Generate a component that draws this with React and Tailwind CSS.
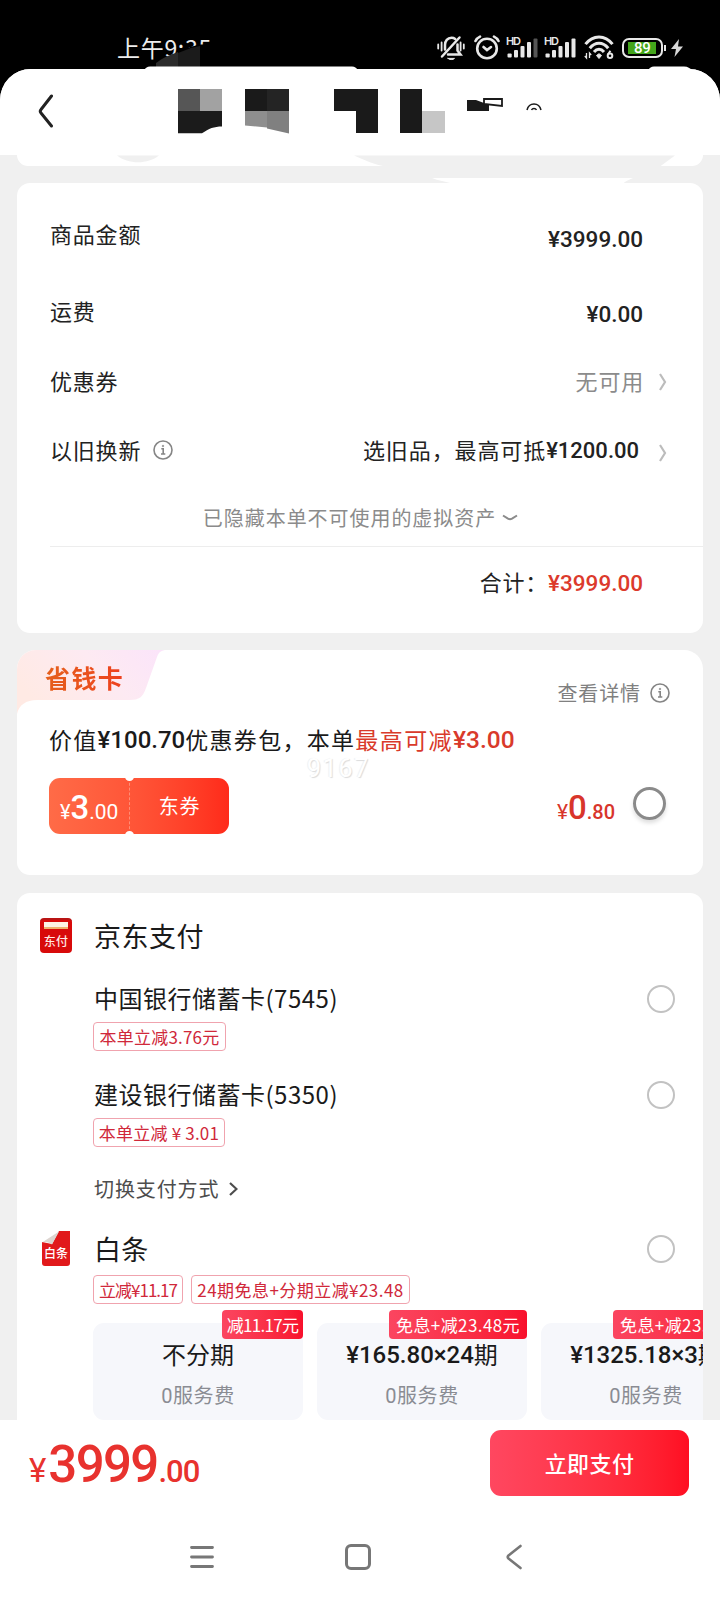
import { clsx } from "clsx";

const CJK = "font-['Noto_Sans_CJK_SC',sans-serif]";
const NUM = "font-['Roboto','Noto_Sans_CJK_SC',sans-serif] font-medium";

const banks = [
    { name: "中国银行储蓄卡", tail: "(7545)", tag: "本单立减3.76元", tagWidth: "w-[133px]" },
    { name: "建设银行储蓄卡", tail: "(5350)", tag: "本单立减 ¥ 3.01", tagWidth: "w-[132px]" },
];

const plans = [
    { amount: "", label: "不分期", badge: "减11.17元", badgeClass: "w-[81px] tracking-[-0.7px]" },
    { amount: "¥165.80×24", label: "期", badge: "免息+减23.48元", badgeClass: "w-[138px] tracking-[0.4px]" },
    { amount: "¥1325.18×3", label: "期", badge: "免息+减23.48元", badgeClass: "w-[138px] tracking-[0.4px]" },
];

function MutedBell() {
    return (
        <svg className="w-7 h-[26px]" viewBox="0 0 28 26" fill="none" stroke="#e8e8e8" strokeWidth="2.500" strokeLinecap="round">
            <path d="M1.200 9.500v4M4.600 7.500v8M26.800 9.500v4M23.600 7.500v8" strokeWidth="1.800" />
            <path d="M8 14.500V10c0-4 2.500-7.200 6.500-7.200 1.500 0 2.700.4 3.700 1.200M20.500 9.500v6l3 4H11" />
            <path d="M22.500 2.500 5 21.500" />
            <path d="M11 23.400h6.500c-1.500 1.600-5 1.600-6.500 0z" fill="#e8e8e8" strokeWidth="1" />
        </svg>
    );
}

function Alarm() {
    return (
        <svg className="w-[26px] h-[26px] ml-[9px]" viewBox="0 0 26 26" fill="none" stroke="#e8e8e8" strokeWidth="2.600" strokeLinecap="round">
            <circle cx="13" cy="13.500" r="9.800" />
            <path d="m9.500 12 3.500 3 4-3" />
            <path d="M1.500 6C2.500 4 4 2.500 6 1.600M24.500 6c-1-2-2.500-3.500-4.500-4.400" />
        </svg>
    );
}

function Signal({ weak, className }) {
    return (
        <svg className={clsx("w-8 h-[26px]", className)} viewBox="0 0 32 26" fill="#e8e8e8">
            <text x="0" y="10" fontSize="11" fontWeight="600" fontFamily="Inter, sans-serif" textLength="15">HD</text>
            <rect x="1.500" y="18.500" width="4.200" height="4" rx="1" />
            <rect x="8" y="15" width="4" height="7.500" rx="1" />
            <rect x="14.500" y="11" width="4" height="11.500" rx="1" />
            <rect x="21" y="7" width="4" height="15.500" rx="1" />
            <rect x="27.500" y="3.500" width="4" height="19" rx="1" fill={weak ? "#555" : "#e8e8e8"} />
        </svg>
    );
}

function Wifi() {
    return (
        <svg className="w-[30px] h-[26px] ml-2" viewBox="0 0 30 26" fill="none" stroke="#e8e8e8" strokeWidth="3">
            <path d="M1.500 9.200C9-.5 21-.5 28.500 9.200M5.800 13.200c5.300-6.600 13.100-6.600 18.400 0M10 17c3-3.700 7-3.700 10 0" />
            <path d="m12.500 20.500 2.500-1.800 2.500 1.800-2.500 3z" fill="#e8e8e8" strokeWidth="1" />
            <path d="M2.500 18v5L.8 21M5.500 23v-5l1.700 2" strokeWidth="1.300" />
            <circle cx="26" cy="20.800" r="2.300" strokeWidth="2" />
            <path d="m24 19.500 2.400-3.700" strokeWidth="2" />
        </svg>
    );
}

function Battery() {
    return (
        <div className="flex items-center ml-2">
            <div className="w-[41px] h-[20px] rounded-[7px] border-2 border-[#e8e8e8] p-[2px]">
                <div className="w-[28px] h-[12px] ml-[2px] bg-[#43a51b] text-white text-[15px] leading-[12.500px] pl-[6px] tracking-[-0.3px] font-medium font-['Roboto',sans-serif]">
                    89
                </div>
            </div>
            <div className="w-[2px] h-[6px] bg-[#e8e8e8] ml-px" />
            <svg className="w-3 h-[18px] ml-[5px]" viewBox="0 0 12 18" fill="#d8d8d8">
                <path d="M8 0 0 10h5l-1.500 8L12 7.500H7z" />
            </svg>
        </div>
    );
}

function Info({ className }) {
    return (
        <svg className={clsx("w-5 h-5", className)} viewBox="0 0 20 20" fill="none" stroke="#858585" strokeWidth="1.600">
            <circle cx="10" cy="10" r="9" />
            <path d="M8.300 8.800h1.900v5M8 14h4.300" />
            <circle cx="10" cy="6" r="0.800" fill="#858585" strokeWidth=".6" />
        </svg>
    );
}

function Arrow({ className }) {
    return (
        <svg className={clsx("w-2 h-[18px]", className)} viewBox="0 0 8 18" fill="none" stroke="#bcbcbc" strokeWidth="2.200">
            <path d="m1 1 5 8-5 8" />
        </svg>
    );
}

function Radio() {
    return <span className="w-7 h-7 rounded-full border-2 border-[#c2c2c2] shrink-0" />;
}

function Tag({ children, className }) {
    return (
        <span
            className={clsx(
                "h-[29px] rounded-[4px] border border-[#f0a3ae] text-[#d0283a] text-[17px] leading-none flex items-center justify-center whitespace-nowrap",
                className
            )}
        >
            {children}
        </span>
    );
}

// Pixelated title plus the leftover brush marks around it
function RedactedMarks() {
    return (
        <svg className="absolute left-0 top-0 w-[720px] h-[184px]" viewBox="0 0 720 184">
            <path d="M163 67v-6l15-9 12-5 10-2.500h15V67z" fill="#000" />
            <path d="M156 67v-4c7-5 13-8 22-11v15z" fill="#2b2b2b" />
            <path d="M178 67V53l13-5 9-2v21z" fill="#1b1b1b" />
            <path d="M144 70c2-2 3-3.500 6-3.500h202c3 0 4 1.500 6 3.500zM648 70c2-2 3-3.500 6-3.500h30c4 0 6 2 8 3.500z" fill="#fff" />

            <path d="M178 89h22v22h-22z" fill="#565656" />
            <path d="M200 89h22v22h-22z" fill="#a2a2a2" />
            <path d="M178 111h44v15.500c-8 0-13 2-20 6.800h-24z" fill="#1b1b1b" />
            <path d="M245 89h22v22h-22z" fill="#1a1a1a" />
            <path d="M267 89h22v22h-22z" fill="#242424" />
            <path d="M245 111h22v16.500l-22-2z" fill="#8e8e8e" />
            <path d="M267 111h22v22.500l-22-5z" fill="#808080" />
            <path d="M334 89h44v44h-22v-22h-22z" fill="#1a1a1a" />
            <path d="M400 89h22v44h-22z" fill="#1a1a1a" />
            <path d="M422 111h23v22h-23z" fill="#c6c6c6" />
            <path d="M467 100h9l8 3h5v8h-22z" fill="#1a1a1a" />
            <path d="M484 99h18v7l-18-2z" fill="#fff" stroke="#1a1a1a" strokeWidth="1.800" />
            <path d="M527 110c2-8 12-8 14 0M531.500 110c1-2 4-2 5 0" fill="none" stroke="#1a1a1a" strokeWidth="1.500" />

            <path d="M117 155.500h42c-11 9-31 9-42 0z" fill="#f0f0f0" />
            <path d="M354 155.500h321l-15 11H385c-10-2-20-6-31-11z" fill="#f0f0f0" />
            <path d="M432 178h201c-4 2-7 3-10 5.500H452c-6-2-14-3-20-5.500z" fill="#fff" />
        </svg>
    );
}

function StatusBar() {
    return (
        <div className="h-[69px] pt-[34px] pl-[117px] pr-[37px] flex justify-between items-start">
            <span className="text-[#ededed] text-[23px] leading-[26px] tracking-[0.7px]">上午9:35</span>
            <div className="flex items-center h-[28px]">
                <MutedBell />
                <Alarm />
                <Signal weak className="ml-[6px]" />
                <Signal className="ml-[6px]" />
                <Wifi />
                <Battery />
            </div>
        </div>
    );
}

function Summary() {
    return (
        <section className="mx-[17px] mt-[17px] h-[450px] rounded-[13px] bg-white pt-[15px] pl-[33px] text-[22px] leading-none text-[#222]">
            <div className="h-[76px] pr-[60px] flex items-center justify-between">
                <span className="pb-[6px] tracking-[0.8px]">商品金额</span>
                <span className={clsx(NUM, "text-[22.5px] pt-[6px]")}>¥3999.00</span>
            </div>
            <div className="h-[76px] pr-[60px] flex items-center justify-between">
                <span className="pb-[5px] tracking-[0.8px]">运费</span>
                <span className={clsx(NUM, "text-[22.5px] pt-[5px]")}>¥0.00</span>
            </div>
            <div className="h-[65px] pr-[36px] flex items-center">
                <span className="pb-[6px] tracking-[0.8px]">优惠券</span>
                <span className="pb-[6px] ml-auto text-[#8b8b8b] tracking-[0.8px]">无可用</span>
                <Arrow className="ml-[15px] -mt-[2px]" />
            </div>
            <div className="h-[73px] pr-[36px] flex items-center">
                <span className="pb-[6px] tracking-[0.8px]">以旧换新</span>
                <Info className="ml-[12px] -mt-[3px]" />
                <span className="pb-[6px] ml-auto tracking-[0.9px]">选旧品，最高可抵</span>
                <span className={clsx(NUM, "text-[22px] -mt-px")}>¥1200.00</span>
                <Arrow className="ml-[20px] mt-[3px]" />
            </div>
            <div className="h-[59px] pt-[2px] pr-[32px] flex items-center justify-center text-[20px] tracking-[0.95px] text-[#8b8b8b] border-b border-[#ededed]">
                已隐藏本单不可使用的虚拟资产
                <svg className="w-4 h-2 ml-[6px]" viewBox="0 0 16 8" fill="none" stroke="#8b8b8b" strokeWidth="2">
                    <path d="m1 1.500 5 3.200q2 1.200 4 0l5-3.200" />
                </svg>
            </div>
            <div className="h-[73px] pr-[60px] flex items-center justify-end">
                <span className="pb-[5px] tracking-[0.8px]">合计：</span>
                <span className={clsx(NUM, "text-[22.5px] text-[#dc3a2c]")}>¥3999.00</span>
            </div>
        </section>
    );
}

function SavingCard() {
    return (
        <section className="relative mx-[17px] mt-[17px] h-[225px] rounded-t-[19px] rounded-b-[13px] bg-white overflow-hidden leading-none text-[#1a1a1a]">
            <svg className="absolute left-0 top-0 w-[150px] h-[64px]" viewBox="0 0 150 64">
                <defs>
                    <linearGradient id="tab" x1="0" y1=".5" x2="1" y2=".1">
                        <stop offset="0" stopColor="#ffeae4" />
                        <stop offset=".55" stopColor="#fdeaf2" />
                        <stop offset="1" stopColor="#fbe4fa" />
                    </linearGradient>
                </defs>
                <path d="M0 0h150c-6 0-8 2-10 7l-11 31c-3 9-7 12-16 12H20C9 50 2 55 0 64z" fill="url(#tab)" />
            </svg>
            <div className="relative h-[56px] flex justify-between pl-[28px] pr-[33px]">
                <span className="pt-[15px] text-[25px] tracking-[1.4px] font-bold bg-linear-to-r from-[#e5601c] to-[#ee3f1e] bg-clip-text text-transparent">
                    省钱卡
                </span>
                <span className="pt-[29px] flex items-center text-[20px] tracking-[0.9px] text-[#808080] whitespace-nowrap">
                    查看详情
                    <Info className="ml-[9px]" />
                </span>
            </div>
            <div className="relative mt-[20px] pl-[32px] h-[26px] flex items-center text-[23px] whitespace-nowrap">
                <span className="tracking-[1.3px]">价值</span>
                <span className={clsx(NUM, "text-[24px] pt-[2px]")}>¥100.70</span>
                <span className="tracking-[1.3px]">优惠券包，本单</span>
                <span className="tracking-[1.4px] text-[#d93a2b]">最高可减</span>
                <span className={clsx(NUM, "text-[24.500px] pt-[2px] text-[#d93a2b]")}>¥3.00</span>
            </div>
            <span className="absolute left-[290px] top-[106px] text-[25px] tracking-[1.7px] text-white font-['Roboto',sans-serif] [text-shadow:1px_1px_1px_#dcdcdc,-1px_0_1px_#f0f0f0]">
                9167
            </span>
            <div className="mt-[26px] pl-[32px] pr-[37px] flex items-start">
                <div className="relative w-[180px] h-[56px] rounded-[11px] bg-linear-to-r from-[#ff6b47] via-[#ff5336] to-[#ff2a1a] text-white flex overflow-hidden">
                    <div className={clsx(NUM, "w-[81px] pl-[11px] pt-[13px] flex items-baseline border-r border-dashed border-[#ff8d75]")}>
                        <span className="text-[20px] font-normal">¥</span>
                        <span className="text-[33px] leading-[33px]">3</span>
                        <span className="text-[21px] font-normal">.00</span>
                    </div>
                    <div className="flex-1 flex items-center justify-center text-[20px] tracking-[0.8px]">东券</div>
                    <span className="absolute left-[76px] -top-[6px] w-[9px] h-[9px] rounded-full bg-white" />
                    <span className="absolute left-[76px] -bottom-[6px] w-[9px] h-[9px] rounded-full bg-white" />
                </div>
                <div className={clsx(NUM, "ml-auto pt-[13px] flex items-baseline text-[#d8352b]")}>
                    <span className="text-[21px] font-normal">¥</span>
                    <span className="text-[33px] leading-[33px]">0</span>
                    <span className="text-[20px]">.80</span>
                </div>
                <span className="mt-[9px] ml-[18px] w-[33px] h-[33px] rounded-full border-3 border-[#8a8a8a] shadow-[0_3px_4px_#0002]" />
            </div>
        </section>
    );
}

function Payment() {
    return (
        <section className="mx-[17px] mt-[18px] h-[527px] rounded-t-[13px] bg-white overflow-hidden pl-[77px] leading-none text-[#1a1a1a]">
            <div className="-ml-[54px] pt-[25px] flex">
                <div className="w-8 h-[35px] rounded-[4px] bg-[#d80a0a] border-t-2 border-[#b91414] pt-[2px] flex flex-col items-center">
                    <span className="w-6 h-[7px] bg-[#fdf3e4] border-b-2 border-[#eeb36e]" />
                    <span className="mt-[6px] text-[12px] tracking-[0.3px] font-medium text-[#ffe9e4]">东付</span>
                </div>
                <h2 className="ml-[22px] mt-[4px] text-[27px] tracking-[0.5px]">京东支付</h2>
            </div>

            {banks.map((bank, i) => (
                <div key={bank.name} className={i === 0 ? "mt-[31px]" : "mt-[29px]"}>
                    <div className="h-[30px] pr-[28px] flex items-center justify-between text-[24px]">
                        <span className="pb-[2px] tracking-[0.5px]">
                            {bank.name}
                            <span>{bank.tail}</span>
                        </span>
                        <Radio />
                    </div>
                    <Tag className={clsx("mt-[8px] -ml-px tracking-[0.2px]", bank.tagWidth)}>{bank.tag}</Tag>
                </div>
            ))}

            <div className="mt-[32px] flex items-center text-[20px] tracking-[0.9px] text-[#4d4d4d]">
                切换支付方式
                <svg className="w-[9px] h-[14px] ml-[10px]" viewBox="0 0 9 14" fill="none" stroke="#4d4d4d" strokeWidth="2.200">
                    <path d="m1 1 6.500 6L1 13" />
                </svg>
            </div>

            <div className="-ml-[52px] mt-[32px] pr-[28px] h-[35px] flex items-center">
                <svg className="w-7 h-[35px]" viewBox="0 0 28 35">
                    <path d="M17 0h11v32q0 3-3 3H3q-3 0-3-3V11l10 2z" fill="#e1191b" />
                    <path d="m0 11.500 17-11-7 13c-2-2-7-3-10-2z" fill="#ddd5d0" />
                    <text x="2" y="27" fontSize="12" fontWeight="500" fontFamily="Noto Sans CJK SC" fill="#fff">白条</text>
                </svg>
                <h2 className="ml-[24px] text-[27px] tracking-[0.3px]">白条</h2>
                <span className="ml-auto flex">
                    <Radio />
                </span>
            </div>

            <div className="-ml-px mt-[9px] flex gap-2">
                <Tag className="w-[90px] tracking-[-1px]">立减¥11.17</Tag>
                <Tag className="w-[219px] tracking-[0.450px]">24期免息+分期立减¥23.48</Tag>
            </div>

            <div className="-ml-px mt-[19px] flex gap-[14px]">
                {plans.map((plan) => (
                    <div key={plan.amount} className="relative shrink-0 w-[210px] h-[97px] rounded-[11px] bg-[#f6f7fb] pt-[18px] text-center">
                        <span
                            className={clsx(
                                "absolute right-0 -top-[13px] h-[29px] rounded-[4px] bg-linear-to-r from-[#fb4560] to-[#f80f2c] text-white text-[17px] flex items-center justify-center whitespace-nowrap",
                                plan.badgeClass
                            )}
                        >
                            {plan.badge}
                        </span>
                        <div className="h-[26px] flex items-center justify-center text-[24px] whitespace-nowrap">
                            <span className={clsx(NUM, "pt-[2px]")}>{plan.amount}</span>
                            <span>{plan.label}</span>
                        </div>
                        <div className="mt-[18px] text-[20px] tracking-[0.6px] text-[#8a8c93]">
                            <span className="font-['Roboto',sans-serif]">0</span>
                            服务费
                        </div>
                    </div>
                ))}
            </div>
        </section>
    );
}

function PayBar() {
    return (
        <footer className="h-[180px] bg-white leading-none">
            <div className="pt-[10px] pl-[29px] pr-[31px] h-[76px] flex justify-between">
                <div className={clsx(NUM, "pt-[9px] flex items-baseline text-[#e8322e]")}>
                    <span className="text-[33px] font-normal">¥</span>
                    <span className="ml-[2px] text-[51px] tracking-[-1.7px]">3999</span>
                    <span className="ml-[1px] text-[31px] tracking-[-1px]">.00</span>
                </div>
                <button className="w-[199px] h-[66px] pb-[3px] rounded-[11px] bg-linear-to-r from-[#ff4760] to-[#ff0d22] text-white text-[22px] font-medium tracking-[0.4px]">
                    立即支付
                </button>
            </div>
            <div className="mt-[48px] pl-[190px] flex items-center">
                <svg className="w-6 h-[26px]" viewBox="0 0 24 26" stroke="#777" strokeWidth="2.800" strokeLinecap="round">
                    <path d="M1.500 3.500h21M1.500 13h21M1.500 22.500h21" />
                </svg>
                <span className="ml-[131px] w-[26px] h-[26px] rounded-[6px] border-[3px] border-[#777]" />
                <svg className="ml-[135px] w-4 h-[26px]" viewBox="0 0 16 26" fill="none" stroke="#777" strokeWidth="2.600" strokeLinecap="round" strokeLinejoin="round">
                    <path d="M14.500 2 2.500 11.500q-1.500 1.500 0 3L14.500 24" />
                </svg>
            </div>
        </footer>
    );
}

export default function App() {
    return (
        <main className={clsx(CJK, "relative w-[720px] h-[1600px] overflow-hidden bg-black")}>
            <StatusBar />
            <div className="rounded-t-[31px] overflow-hidden bg-[#f0f0f0]">
                <header className="h-[86px] bg-white pl-[38px] pt-[25px]">
                    <svg className="w-4 h-[35px]" viewBox="0 0 16 35" fill="none" stroke="#222" strokeWidth="3" strokeLinecap="round" strokeLinejoin="round">
                        <path d="M13.500 2 3 15.500q-1.500 1.800 0 3.500l10.500 13" />
                    </svg>
                </header>
                <div className="mx-[17px] h-[11px] rounded-b-[13px] bg-white" />
                <Summary />
                <SavingCard />
                <Payment />
                <PayBar />
            </div>
            <RedactedMarks />
        </main>
    );
}
